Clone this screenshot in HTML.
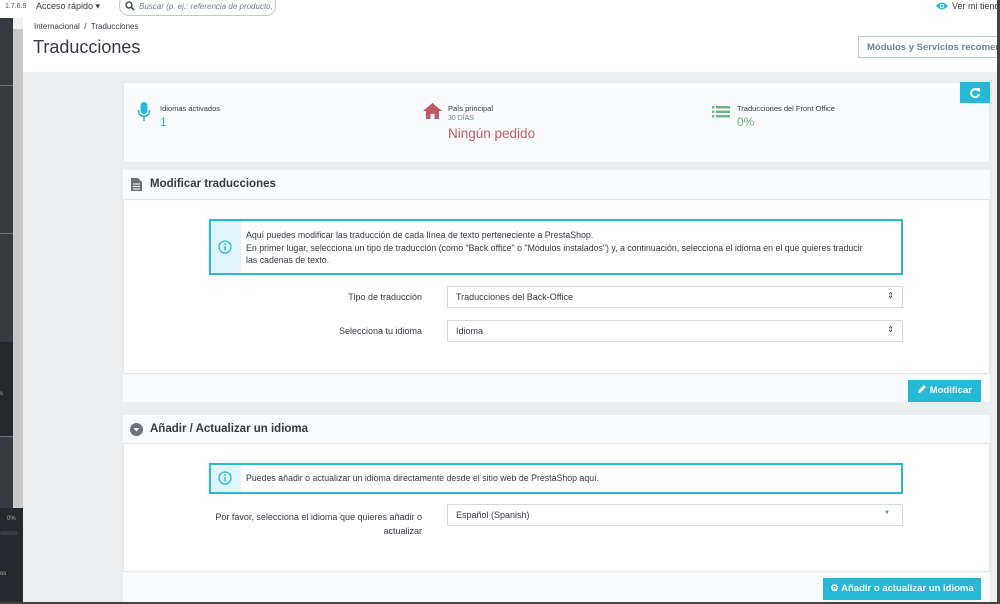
<!DOCTYPE html>
<html><head><meta charset="utf-8"><style>
*{margin:0;padding:0;box-sizing:border-box}
html,body{width:1000px;height:604px;overflow:hidden}
body{position:relative;background:#ebedef;font-family:"Liberation Sans",sans-serif;color:#363a41;font-size:9px}
.a{position:absolute}
.panel{position:absolute;left:123px;width:867px;background:#fff;border:1px solid #e3e8ea}
.ph{position:absolute;background:#fafbfc;border-bottom:1px solid #e3e8ea}
.pf{position:absolute;background:#fafbfc;border-top:1px solid #e3e8ea}
.alert{position:absolute;border:2px solid #25b9d7;background:#fff}
.alert .ic{position:absolute;left:0;top:0;bottom:0;width:30px;background:#dff5f9}
.sel{position:absolute;border:1px solid #d3dbde;background:#fff;height:22px;font-size:9px;padding:5px 8px;color:#363a41}
.btn{position:absolute;background:#25b9d7;color:#fff;font-weight:bold;font-size:9.5px;height:22px;line-height:22px;text-align:center}
.lbl{position:absolute;text-align:right;font-size:9px;color:#363a41}
</style></head><body>
<div class="a" style="left:0;top:0;width:1000px;height:18px;background:#fff"></div>
<div class="a" style="left:5px;top:3px;font-size:7px;color:#555">1.7.6.9</div>
<div class="a" style="left:36px;top:1px;font-size:9px;color:#363a41">Acceso rápido ▾</div>
<div class="a" style="left:119px;top:-6px;width:157px;height:22px;border:1px solid #bbcdd2;border-radius:10px;background:#fff"></div>
<svg class="a" style="left:125px;top:1px" width="10" height="10"><circle cx="4" cy="4" r="3" stroke="#363a41" stroke-width="1.3" fill="none"/><path d="M6.2 6.2L9 9" stroke="#363a41" stroke-width="1.5"/></svg>
<div class="a" style="left:139px;top:2px;font-size:8px;font-style:italic;color:#6c868e;white-space:nowrap;width:135px;overflow:hidden">Buscar (p. ej.: referencia de producto, n</div>
<svg class="a" style="left:936px;top:1px" width="12" height="10"><path d="M0 5Q6 -2 12 5Q6 12 0 5Z" fill="#25b9d7"/><circle cx="6" cy="5" r="2.2" fill="#fff"/><circle cx="6" cy="5" r="1.2" fill="#25b9d7"/></svg>
<div class="a" style="left:952px;top:1px;font-size:9px;color:#363a41;white-space:nowrap">Ver mi tienda</div>
<div class="a" style="left:0;top:18px;width:13px;height:586px;background:#363a41"></div>
<div class="a" style="left:0;top:85px;width:13px;height:1px;background:#6c7378"></div>
<div class="a" style="left:0;top:233px;width:13px;height:1px;background:#6c7378"></div>
<div class="a" style="left:0;top:342px;width:13px;height:94px;background:#25282c"></div>
<div class="a" style="left:0;top:436px;width:13px;height:1px;background:#6c7378"></div>
<div class="a" style="left:0;top:391px;font-size:6px;color:#aaa">s</div>
<div class="a" style="left:13px;top:18px;width:10px;height:490px;background:#c8c8c8"></div>
<div class="a" style="left:13px;top:18px;width:10px;height:11px;background:#f0f0f0"></div>
<div class="a" style="left:0;top:508px;width:23px;height:96px;background:#25282c"></div>
<div class="a" style="left:7px;top:516px;font-size:6px;color:#aaa">0%</div>
<div class="a" style="left:0;top:531px;width:18px;height:4px;border-radius:2px;background:#363a41"></div>
<div class="a" style="left:0;top:571px;font-size:6px;color:#aaa">os</div>
<div class="a" style="left:23px;top:18px;width:977px;height:54px;background:#fff"></div>
<div class="a" style="left:34px;top:22px;font-size:8px;color:#363a41">Internacional &nbsp;/&nbsp; Traducciones</div>
<div class="a" style="left:33px;top:37px;font-size:18px;color:#363a41">Traducciones</div>
<div class="a" style="left:858px;top:36px;width:142px;height:22px;border:1px solid #bbcdd2;border-right:none;background:#fff;font-size:9.5px;font-weight:bold;color:#6c868e;padding:5px 8px;white-space:nowrap;overflow:hidden">Módulos y Servicios recomendados</div>
<div class="panel" style="top:82px;height:81px;background:#fafbfc"></div>
<svg class="a" style="left:137px;top:102px" width="14" height="20"><rect x="3.5" y="0" width="7" height="12" rx="3.5" fill="#25b9d7"/><path d="M1.5 8Q1.5 14 7 14Q12.5 14 12.5 8" stroke="#25b9d7" stroke-width="1.5" fill="none"/><path d="M7 14V19" stroke="#25b9d7" stroke-width="1.5"/></svg>
<div class="a" style="left:160px;top:104px;font-size:7.5px">Idiomas activados</div>
<div class="a" style="left:160px;top:115px;font-size:12px;color:#25b9d7">1</div>
<svg class="a" style="left:423px;top:103px" width="19" height="16"><path d="M9.5 0L19 8H16V16H11.5V11H7.5V16H3V8H0Z" fill="#c05c67"/></svg>
<div class="a" style="left:448px;top:104px;font-size:7.5px">País principal</div>
<div class="a" style="left:448px;top:115px;font-size:7px;color:#6c868e">30 DÍAS</div>
<div class="a" style="left:448px;top:126px;font-size:13.5px;color:#c05c67">Ningún pedido</div>
<svg class="a" style="left:712px;top:106px" width="18" height="12"><g fill="#70b580"><rect x="0" y="0" width="2.5" height="2.5"/><rect x="0" y="4.5" width="2.5" height="2.5"/><rect x="0" y="9" width="2.5" height="2.5"/><rect x="4" y="0" width="14" height="2.5"/><rect x="4" y="4.5" width="14" height="2.5"/><rect x="4" y="9" width="14" height="2.5"/></g></svg>
<div class="a" style="left:737px;top:104px;font-size:7.5px">Traducciones del Front Office</div>
<div class="a" style="left:737px;top:115px;font-size:12px;color:#70b580">0%</div>
<div class="a" style="left:960px;top:82px;width:30px;height:21px;background:#25b9d7"></div>
<svg class="a" style="left:969px;top:87px" width="12" height="12"><path d="M9.5 4A4 4 0 1 0 10 7" stroke="#fff" stroke-width="2" fill="none"/><path d="M7 1L11 1L11 5Z" fill="#fff"/></svg>
<div class="panel" style="top:170px;height:232px"></div>
<div class="ph" style="left:123px;width:867px;top:170px;height:30px"></div>
<svg class="a" style="left:131px;top:178px" width="11" height="13"><path d="M0 0H7L11 4V13H0Z" fill="#6c7378"/><path d="M2 6H9M2 8.5H9M2 11H9" stroke="#fff" stroke-width="1"/></svg>
<div class="a" style="left:150px;top:178px;font-size:11.5px;font-weight:bold">Modificar traducciones</div>
<div class="alert" style="left:209px;top:219px;width:694px;height:56px"><div class="ic"></div></div>
<svg class="a" style="left:218px;top:240px" width="14" height="14"><circle cx="7" cy="7" r="6" stroke="#25b9d7" stroke-width="1.3" fill="none"/><path d="M7 6V10.5" stroke="#25b9d7" stroke-width="1.4"/><circle cx="7" cy="4" r="0.9" fill="#25b9d7"/></svg>
<div class="a" style="left:246px;top:229px;font-size:8.8px;line-height:12.5px;width:655px;white-space:nowrap">Aquí puedes modificar las traducción de cada línea de texto perteneciente a PrestaShop.<br>En primer lugar, selecciona un tipo de traducción (como "Back office" o "Módulos instalados") y, a continuación, selecciona el idioma en el que quieres traducir<br>las cadenas de texto.</div>
<div class="lbl" style="left:250px;width:172px;top:292px">Tipo de traducción</div>
<div class="sel" style="left:447px;top:286px;width:456px">Traducciones del Back-Office<span style="position:absolute;right:8px;top:4px;font-size:8px">⇕</span></div>
<div class="lbl" style="left:250px;width:172px;top:326px">Selecciona tu idioma</div>
<div class="sel" style="left:447px;top:320px;width:456px">Idioma<span style="position:absolute;right:8px;top:4px;font-size:8px">⇕</span></div>
<div class="pf" style="left:123px;width:867px;top:373px;height:29px"></div>
<div class="btn" style="left:908px;top:380px;width:73px"><svg width="10" height="10" style="vertical-align:-1px"><path d="M1 9L1.5 6.5L7 1L9 3L3.5 8.5Z" fill="#fff"/></svg> Modificar</div>
<div class="panel" style="top:415px;height:189px"></div>
<div class="ph" style="left:123px;width:867px;top:415px;height:29px"></div>
<svg class="a" style="left:130px;top:423px" width="13" height="13"><circle cx="6.5" cy="6.5" r="6.5" fill="#6c7378"/><path d="M3.5 5H9.5L6.5 8.5Z" fill="#fff"/></svg>
<div class="a" style="left:150px;top:423px;font-size:11.5px;font-weight:bold">Añadir / Actualizar un idioma</div>
<div class="alert" style="left:209px;top:463px;width:694px;height:31px"><div class="ic"></div></div>
<svg class="a" style="left:218px;top:471px" width="14" height="14"><circle cx="7" cy="7" r="6" stroke="#25b9d7" stroke-width="1.3" fill="none"/><path d="M7 6V10.5" stroke="#25b9d7" stroke-width="1.4"/><circle cx="7" cy="4" r="0.9" fill="#25b9d7"/></svg>
<div class="a" style="left:246px;top:473px;font-size:8.8px">Puedes añadir o actualizar un idioma directamente desde el sitio web de PrestaShop aquí.</div>
<div class="lbl" style="left:180px;width:242px;top:510px;line-height:14px">Por favor, selecciona el idioma que quieres añadir o<br>actualizar</div>
<div class="sel" style="left:447px;top:504px;width:456px">Español (Spanish)<span style="position:absolute;right:12px;top:5px;font-size:6px;color:#6c868e">▼</span></div>
<div class="pf" style="left:123px;width:867px;top:571px;height:33px"></div>
<div class="btn" style="left:823px;top:578px;width:158px">⚙ Añadir o actualizar un idioma</div>
<div class="a" style="left:997px;top:0;width:3px;height:604px;background:#444"></div>
<div class="a" style="left:0;top:602px;width:1000px;height:2px;background:#444"></div>
</body></html>
